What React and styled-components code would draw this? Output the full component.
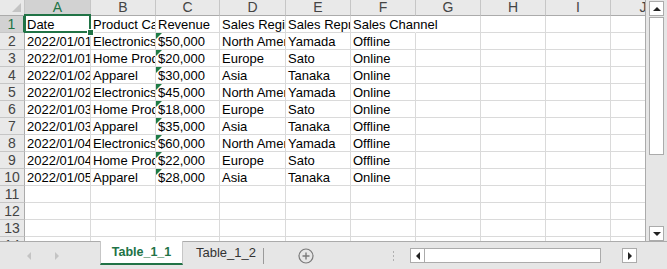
import { createGlobalStyle, styled } from "styled-components";

const GlobalStyle = createGlobalStyle`
  body {
    margin: 0;
    background: #e6e6e6;
  }
`;

const columns = ["A", "B", "C", "D", "E", "F", "G", "H", "I", "J"];
const widths = [25, 66, 65, 64, 66, 65, 65, 65, 65, 65, 65];

const data = [
  ["Date", "Product Category", "Revenue", "Sales Region", "Sales Representative", "Sales Channel"],
  ["2022/01/01", "Electronics", "$50,000", "North America", "Yamada", "Offline"],
  ["2022/01/01", "Home Products", "$20,000", "Europe", "Sato", "Online"],
  ["2022/01/02", "Apparel", "$30,000", "Asia", "Tanaka", "Online"],
  ["2022/01/02", "Electronics", "$45,000", "North America", "Yamada", "Online"],
  ["2022/01/03", "Home Products", "$18,000", "Europe", "Sato", "Online"],
  ["2022/01/03", "Apparel", "$35,000", "Asia", "Tanaka", "Offline"],
  ["2022/01/04", "Electronics", "$60,000", "North America", "Yamada", "Offline"],
  ["2022/01/04", "Home Products", "$22,000", "Europe", "Sato", "Offline"],
  ["2022/01/05", "Apparel", "$28,000", "Asia", "Tanaka", "Online"],
];

const TOTAL_ROWS = 14;

const App = () => {
  const rows = [];
  for (let r = 0; r < TOTAL_ROWS; r++) {
    const values = data[r] || [];
    rows.push(
      <RowHead key={`h${r}`} $active={r === 0}>
        {r + 1}
      </RowHead>
    );
    columns.forEach((col, c) => {
      const value = values[c] || "";
      const spill = c === 5 && value.length > 8;
      rows.push(
        <Cell
          key={`${col}${r}`}
          $selected={r === 0 && c === 0}
          $flag={c === 2 && r > 0 && r < data.length}
          $spill={spill}
        >
          {value}
        </Cell>
      );
    });
  }

  return (
    <Sheet>
      <GlobalStyle />
      <Body>
        <Grid>
          <Corner />
          {columns.map((col, i) => (
            <ColHead key={col} $active={i === 0}>
              {col}
            </ColHead>
          ))}
          {rows}
        </Grid>
        <VScroll>
          <ScrollButton>
            <Arrow $dir="up" />
          </ScrollButton>
          <VThumb />
          <Spacer />
          <ScrollButton>
            <Arrow $dir="down" />
          </ScrollButton>
        </VScroll>
      </Body>
      <TabBar>
        <Nav>
          <NavArrow $dir="left" />
          <NavArrow $dir="right" />
        </Nav>
        <Tab $active>Table_1_1</Tab>
        <Tab>Table_1_2</Tab>
        <Divider />
        <AddButton>
          <svg width="16" height="16" viewBox="0 0 16 16">
            <circle cx="8" cy="8" r="7" fill="none" stroke="#7a7a7a" strokeWidth="1.2" />
            <path d="M8 4.5v7M4.5 8h7" stroke="#7a7a7a" strokeWidth="1.4" />
          </svg>
        </AddButton>
        <Dots>
          <span />
          <span />
          <span />
        </Dots>
        <HScroll>
          <ScrollButton>
            <Arrow $dir="left" />
          </ScrollButton>
          <HThumb />
          <Spacer />
          <ScrollButton>
            <Arrow $dir="right" />
          </ScrollButton>
        </HScroll>
      </TabBar>
    </Sheet>
  );
};

const Sheet = styled.div`
  width: 667px;
  height: 269px;
  display: flex;
  flex-direction: column;
  overflow: hidden;
  background: #e6e6e6;
  font-family: "Liberation Sans", Arial, sans-serif;
`;

const Body = styled.div`
  display: flex;
  height: 241px;
`;

const Grid = styled.div`
  box-sizing: border-box;
  width: 646px;
  height: 241px;
  display: grid;
  grid-template-columns: ${widths.map((w) => `${w}px`).join(" ")};
  grid-template-rows: 16px;
  grid-auto-rows: 17px;
  background: #fff;
  border-right: 1px solid #ababab;
  overflow: hidden;
`;

const Corner = styled.div`
  position: relative;
  background: #e9e9e9;
  border-right: 1px solid #c6c6c6;
  border-bottom: 1px solid #ababab;
  &::after {
    content: "";
    position: absolute;
    right: 3px;
    bottom: 3px;
    border-left: 9px solid transparent;
    border-bottom: 9px solid #c4c4c4;
  }
`;

const ColHead = styled.div`
  box-sizing: border-box;
  background: ${(p) => (p.$active ? "#d2d2d2" : "#e9e9e9")};
  color: ${(p) => (p.$active ? "#217346" : "#444")};
  border-right: 1px solid #c6c6c6;
  border-bottom: ${(p) => (p.$active ? "2px solid #217346" : "1px solid #ababab")};
  font-size: 14px;
  line-height: 15px;
  text-align: center;
  overflow: hidden;
`;

const RowHead = styled.div`
  box-sizing: border-box;
  background: ${(p) => (p.$active ? "#d2d2d2" : "#e9e9e9")};
  color: ${(p) => (p.$active ? "#217346" : "#444")};
  border-right: ${(p) => (p.$active ? "2px solid #217346" : "1px solid #ababab")};
  border-bottom: 1px solid #c6c6c6;
  font-size: 14px;
  line-height: 16px;
  text-align: center;
`;

const Cell = styled.div`
  position: relative;
  box-sizing: border-box;
  border-right: 1px solid ${(p) => (p.$spill ? "transparent" : "#dadada")};
  border-bottom: 1px solid #dadada;
  padding: 0 2px;
  font-size: 13px;
  line-height: 17px;
  color: #000;
  white-space: nowrap;
  overflow: ${(p) => (p.$spill || p.$selected ? "visible" : "hidden")};
  z-index: ${(p) => (p.$spill ? 1 : "auto")};

  ${(p) =>
    p.$flag &&
    `
    &::before {
      content: "";
      position: absolute;
      top: 0;
      left: 0;
      border-top: 6px solid #1e7b45;
      border-right: 6px solid transparent;
    }
  `}

  ${(p) =>
    p.$selected &&
    `
    &::after {
      content: "";
      position: absolute;
      top: -2px;
      left: -1px;
      right: -1px;
      bottom: -1px;
      border: 2px solid #217346;
      z-index: 2;
    }
    &::before {
      content: "";
      position: absolute;
      right: -4px;
      bottom: -4px;
      width: 5px;
      height: 5px;
      background: #217346;
      border: 1px solid #fff;
      z-index: 3;
    }
  `}
`;

const VScroll = styled.div`
  flex: 1;
  display: flex;
  flex-direction: column;
  align-items: center;
  padding: 1px 0 0;
`;

const ScrollButton = styled.div`
  box-sizing: border-box;
  width: 15px;
  height: 15px;
  flex-shrink: 0;
  display: flex;
  align-items: center;
  justify-content: center;
  background: #fff;
  border: 1px solid #ababab;
`;

const Arrow = styled.div`
  width: 0;
  height: 0;
  ${(p) =>
    p.$dir === "up"
      ? "border-left: 4px solid transparent; border-right: 4px solid transparent; border-bottom: 4px solid #222;"
      : p.$dir === "down"
      ? "border-left: 4px solid transparent; border-right: 4px solid transparent; border-top: 4px solid #222;"
      : p.$dir === "left"
      ? "border-top: 4px solid transparent; border-bottom: 4px solid transparent; border-right: 4px solid #222;"
      : "border-top: 4px solid transparent; border-bottom: 4px solid transparent; border-left: 4px solid #222;"}
`;

const VThumb = styled.div`
  box-sizing: border-box;
  width: 15px;
  height: 138px;
  margin-top: 1px;
  background: #fff;
  border: 1px solid #ababab;
`;

const Spacer = styled.div`
  flex: 1;
`;

const TabBar = styled.div`
  box-sizing: border-box;
  height: 28px;
  display: flex;
  align-items: center;
  border-top: 1px solid #ababab;
  background: #e6e6e6;
`;

const Nav = styled.div`
  width: 100px;
  display: flex;
  align-items: center;
  gap: 24px;
  padding-left: 27px;
  box-sizing: border-box;
`;

const NavArrow = styled.div`
  width: 0;
  height: 0;
  border-top: 4px solid transparent;
  border-bottom: 4px solid transparent;
  ${(p) =>
    p.$dir === "left"
      ? "border-right: 4px solid #c4c4c4;"
      : "border-left: 4px solid #c4c4c4;"}
`;

const Tab = styled.div`
  box-sizing: border-box;
  align-self: flex-start;
  height: 24px;
  margin-top: -1px;
  font-size: ${(p) => (p.$active ? "12.5px" : "13px")};
  font-weight: ${(p) => (p.$active ? "bold" : "normal")};
  line-height: 22px;
  color: ${(p) => (p.$active ? "#217346" : "#333")};
  ${(p) =>
    p.$active
      ? `
    width: 83px;
    text-align: center;
    background: #fff;
    border-left: 1px solid #c6c6c6;
    border-right: 1px solid #c6c6c6;
    border-bottom: 2px solid #217346;
  `
      : `
    padding: 1px 0 0 13px;
    width: 80px;
  `}
`;

const Divider = styled.div`
  width: 1px;
  height: 16px;
  background: #9a9a9a;
`;

const AddButton = styled.div`
  display: flex;
  margin-left: 34px;
`;

const Dots = styled.div`
  margin-left: 79px;
  display: flex;
  flex-direction: column;
  gap: 2px;
  span {
    width: 1px;
    height: 2px;
    background: #b0b0b0;
  }
`;

const HScroll = styled.div`
  margin-left: 16px;
  width: 227px;
  display: flex;
  align-items: center;
`;

const HThumb = styled.div`
  box-sizing: border-box;
  width: 177px;
  height: 15px;
  margin-left: -1px;
  background: #fff;
  border: 1px solid #ababab;
`;

export default App;
